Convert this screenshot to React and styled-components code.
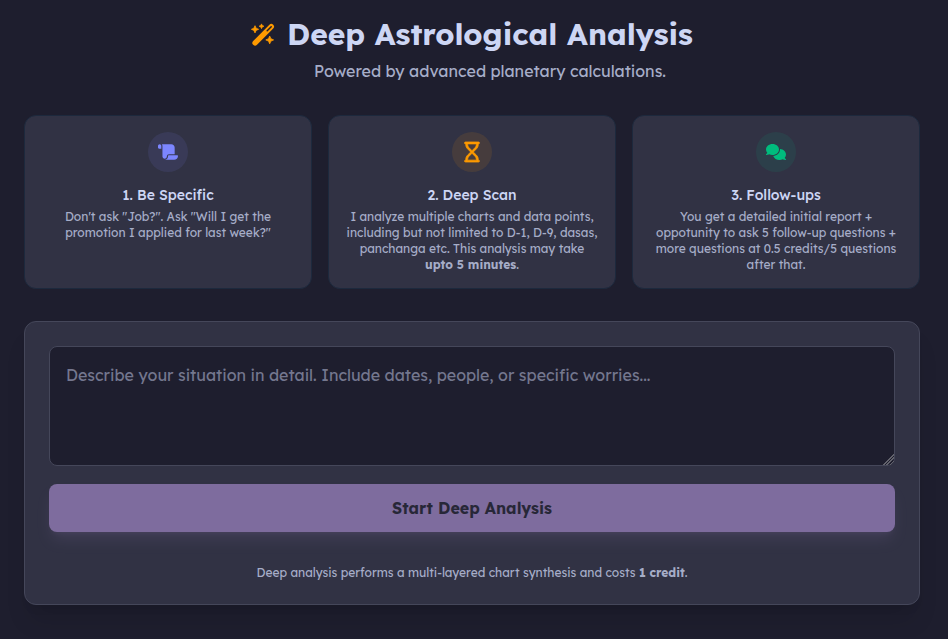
import styled, { createGlobalStyle } from "styled-components";
import { FaScroll, FaRegHourglass, FaComments } from "react-icons/fa6";

const GlobalStyle = createGlobalStyle`
    * {
        box-sizing: border-box;
    }
    body {
        margin: 0;
        background: #1e1e2e;
        color: #cdd6f4;
        font-family: Lexend, Inter, sans-serif;
        font-size: 16px;
        line-height: 24px;
    }
    h1, h2, p {
        margin: 0;
    }
`;

const Page = styled.main`
    padding: 16px 28px 32px 24px;
`;

const Content = styled.div`
    max-width: 896px;
    margin: 0 auto;
    display: flex;
    flex-direction: column;
    gap: 32px;
`;

const Header = styled.header`
    display: grid;
    grid-template-columns: auto auto;
    justify-content: center;
    align-items: center;
    column-gap: 12px;
    row-gap: 7px;
    text-align: center;
    svg {
        color: #fe9a00;
        width: 24px;
        height: 24px;
    }
`;

const Title = styled.h1`
    font-size: 30px;
    line-height: 36px;
    font-weight: 700;
`;

const Subtitle = styled.p`
    grid-column: 2;
    color: #a6adc8;
`;

const Steps = styled.section`
    display: grid;
    grid-template-columns: repeat(3, 1fr);
    gap: 16px;
`;

const StepCard = styled.article`
    display: flex;
    flex-direction: column;
    align-items: center;
    padding: 16px 16px 15px;
    border: 1px solid #1d293d;
    border-radius: 12px;
    background: #313244;
    text-align: center;
`;

const StepIcon = styled.div`
    display: flex;
    align-items: center;
    justify-content: center;
    width: 40px;
    height: 40px;
    margin-bottom: 13px;
    border-radius: 50%;
    font-size: 20px;
    color: ${({ $color }) => $color};
    background: ${({ $color }) => $color}1a;
`;

const HourglassIcon = styled(FaRegHourglass)`
    stroke: currentColor;
    stroke-width: 20;
    overflow: visible;
`;

const StepTitle = styled.h2`
    margin-bottom: 4px;
    font-size: 14px;
    line-height: 20px;
    font-weight: 500;
`;

const StepText = styled.p`
    font-size: 12px;
    line-height: 16px;
    color: #a6adc8;
`;

const QuestionForm = styled.form`
    padding: 24px 24px 23px;
    border: 1px solid #45475a;
    border-radius: 12px;
    background: #313244;
    box-shadow: 0 20px 25px -5px rgba(0, 0, 0, 0.1), 0 8px 10px -6px rgba(0, 0, 0, 0.1);
`;

const Question = styled.textarea`
    display: block;
    width: 100%;
    height: 120px;
    padding: 16px;
    border: 1px solid #45475a;
    border-radius: 8px;
    background: #1e1e2e;
    color: #cdd6f4;
    font: inherit;
    resize: vertical;
    &::placeholder {
        color: #74778e;
    }
    &::-webkit-resizer {
        background: linear-gradient(
            135deg,
            transparent 62%,
            #62626c 62% 67%,
            transparent 67% 73%,
            #62626c 73% 78%,
            transparent 78% 84%,
            #62626c 84% 89%,
            transparent 89%
        );
    }
`;

const StartButton = styled.button`
    display: block;
    width: 100%;
    margin-top: 18px;
    padding: 12px;
    border: 0;
    border-radius: 8px;
    background: #cba6f7;
    color: #1e1e2e;
    font: inherit;
    font-weight: 700;
    box-shadow: 0 10px 15px -3px rgba(203, 166, 247, 0.2), 0 4px 6px -4px rgba(203, 166, 247, 0.2);
    &:disabled {
        opacity: 0.5;
    }
`;

const CostNote = styled.p`
    margin-top: 33px;
    font-size: 12px;
    line-height: 16px;
    text-align: center;
    color: #a6adc8;
`;

const WandIcon = () => {
    return (
        <svg viewBox="0 0 24 24" fill="currentColor" stroke="currentColor" strokeLinejoin="round" aria-hidden="true">
            <path d="M4.1 20.9 20.3 4.6" strokeWidth="5.4" strokeLinecap="round" />
            <path d="M16.2 8.8 20.2 4.7" stroke="#1e1e2e" strokeWidth="1.5" strokeLinecap="round" />
            <g strokeWidth="0.8">
                <path d="M4 3.7 5.1 6.2 7.6 7.3 5.1 8.4 4 10.9 2.9 8.4 .4 7.3 2.9 6.2Z" />
                <path d="M10.5 1.9 11.2 3.5 12.9 4.2 11.2 4.9 10.5 6.6 9.8 4.9 8.1 4.2 9.8 3.5Z" />
                <path d="M18.7 14 19.9 16.7 22.6 17.9 19.9 19.1 18.7 21.8 17.5 19.1 14.8 17.9 17.5 16.7Z" />
            </g>
        </svg>
    );
}

const Step = ({ icon, color, title, children }) => {
    return (
        <StepCard>
            <StepIcon $color={color}>{icon}</StepIcon>
            <StepTitle>{title}</StepTitle>
            <StepText>{children}</StepText>
        </StepCard>
    );
}

const App = () => {
    return (
        <Page>
            <GlobalStyle />
            <Content>
                <Header>
                    <WandIcon />
                    <Title>Deep Astrological Analysis</Title>
                    <Subtitle>Powered by advanced planetary calculations.</Subtitle>
                </Header>
                <Steps>
                    <Step icon={<FaScroll />} color="#7c86ff" title="1. Be Specific">
                        Don't ask "Job?". Ask "Will I get the promotion I applied for last week?"
                    </Step>
                    <Step icon={<HourglassIcon />} color="#fe9a00" title="2. Deep Scan">
                        I analyze multiple charts and data points, including but not limited to D-1, D-9, dasas,
                        panchanga etc. This analysis may take <b>upto 5 minutes</b>.
                    </Step>
                    <Step icon={<FaComments />} color="#00bc7d" title="3. Follow-ups">
                        You get a detailed initial report + oppotunity to ask 5 follow-up questions + more
                        questions at 0.5 credits/5 questions after that.
                    </Step>
                </Steps>
                <QuestionForm>
                    <Question
                        aria-label="Your situation"
                        placeholder="Describe your situation in detail. Include dates, people, or specific worries..."
                    />
                    <StartButton type="submit" disabled>Start Deep Analysis</StartButton>
                    <CostNote>
                        Deep analysis performs a multi-layered chart synthesis and costs <b>1 credit</b>.
                    </CostNote>
                </QuestionForm>
            </Content>
        </Page>
    );
}

export default App;
